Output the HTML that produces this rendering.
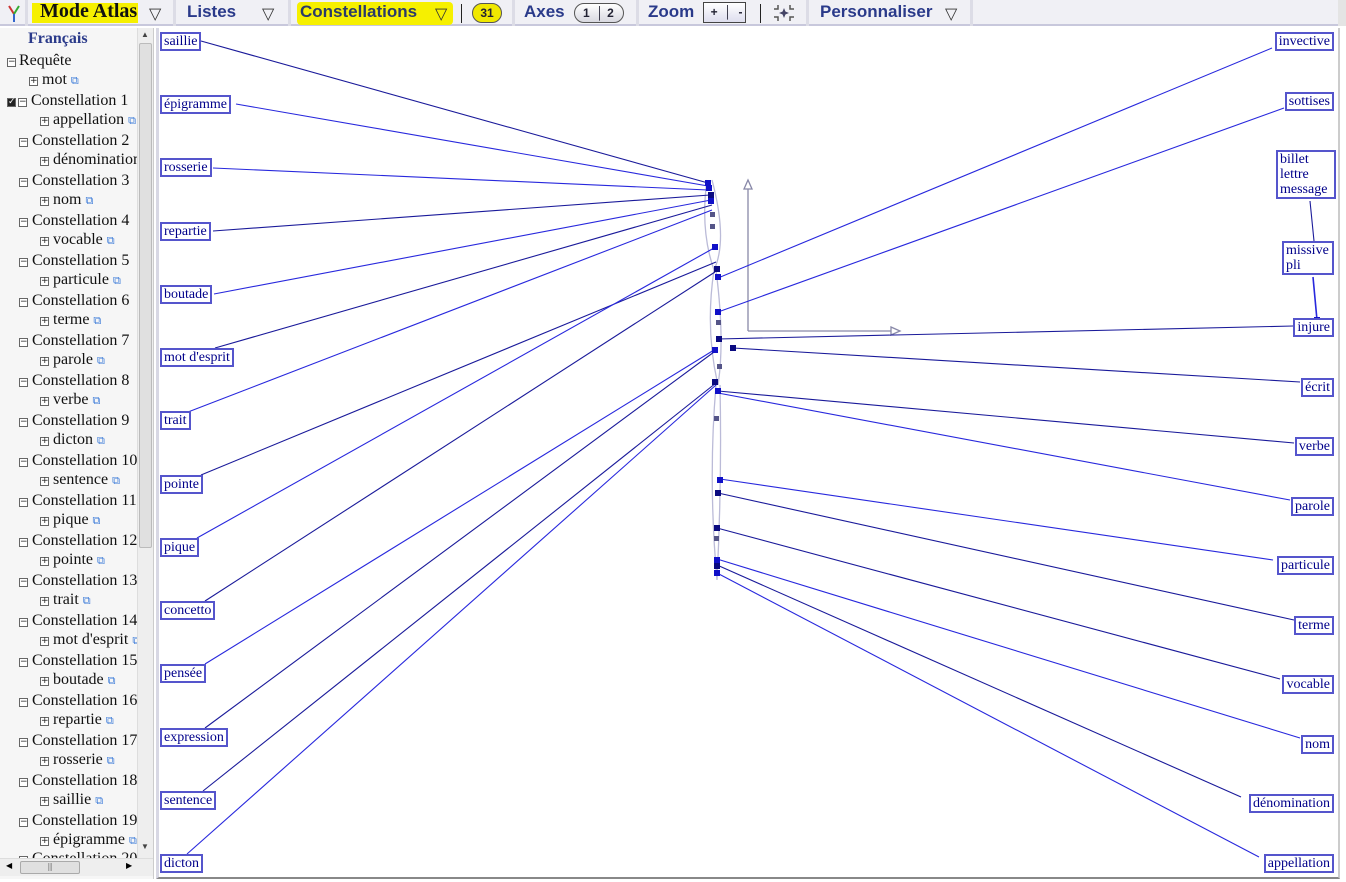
<!DOCTYPE html>
<html><head><meta charset="utf-8"><style>
*{margin:0;padding:0;box-sizing:border-box}
body{width:1346px;height:882px;overflow:hidden;background:#fff;font-family:"Liberation Serif",serif;position:relative}
#tb{position:absolute;left:0;top:0;width:1346px;height:26px;background:#f0f0f5;border-bottom:2px solid #c8c8dc}
.t{position:absolute;top:2px;font-family:"Liberation Sans",sans-serif;font-weight:bold;font-size:17px;color:#2a3a8a}
.sep{position:absolute;top:0;width:3px;height:26px;background:#dcdce6}
.hl{position:absolute;background:#f6f000}
.tri{position:absolute;top:4px;font-size:16px;color:#333;font-family:"DejaVu Sans",sans-serif}
.pill{position:absolute;top:3px;height:20px;border:1px solid #555;border-radius:10px;background:linear-gradient(#fff,#d8d8e0);font:bold 12px "Liberation Sans",sans-serif;color:#223;text-align:center;line-height:18px}
#lp{position:absolute;left:0;top:28px;width:154px;height:851px;background:#f6f6f6;border-right:1px solid #ccc}
#lp .h{position:absolute;left:28px;top:2px;font-weight:bold;font-size:16px;color:#2a3a8a}
.it{position:absolute;font-size:16px;color:#111;white-space:nowrap}
.bx{display:inline-block;width:9px;height:9px;border:1px solid #666;font:9px/7px "DejaVu Sans",sans-serif;text-align:center;vertical-align:1px;margin-right:4px;color:#222;background:#fff}
.lk{color:#3a7ad8;font-size:11px}
#vs{position:absolute;left:137px;top:28px;width:16px;height:830px;background:#eee;border-left:1px solid #ddd}
#hs{position:absolute;left:0;top:858px;width:153px;height:18px;background:#eee;border-top:1px solid #ddd}
#cv{position:absolute;left:156px;top:28px;width:1184px;height:851px;border-left:3px solid #d8d8e4;border-right:2px solid #ccc;border-bottom:2px solid #888}
.lb{position:absolute;border:2px solid #5555cc;background:#fff;font-size:14px;color:#00008a;padding:0 2px;line-height:15px;white-space:nowrap}
</style></head><body>
<div id="tb">
 <svg style="position:absolute;left:4px;top:3px" width="20" height="20"><path d="M10 11 L5 3" stroke="#c33" stroke-width="2" fill="none"/><path d="M10 11 L15 3" stroke="#3a3" stroke-width="2"/><path d="M10 11 L10 19" stroke="#36c" stroke-width="2"/></svg>
 <div class="sep" style="left:25px"></div>
 <div class="hl" style="left:32px;top:3px;width:106px;height:20px"></div>
 <div class="t" style="left:40px;font-family:'Liberation Serif',serif;font-size:20px;top:0px;color:#111">Mode Atlas</div>
 <div class="tri" style="left:149px">▽</div>
 <div class="sep" style="left:173px"></div>
 <div class="t" style="left:187px">Listes</div>
 <div class="tri" style="left:262px">▽</div>
 <div class="sep" style="left:288px"></div>
 <div class="hl" style="left:297px;top:2px;width:156px;height:23px;border-radius:4px"></div>
 <div class="t" style="left:300px;color:#2a3a6a">Constellations</div>
 <div class="tri" style="left:435px">▽</div>
 <div style="position:absolute;left:461px;top:4px;width:1px;height:19px;background:#222"></div>
 <div class="pill" style="left:472px;width:30px;background:#f0e800">31</div>
 <div class="sep" style="left:512px"></div>
 <div class="t" style="left:524px">Axes</div>
 <div class="pill" style="left:574px;width:50px;text-align:left;padding-left:8px">1 &nbsp;│&nbsp;2</div>
 <div class="sep" style="left:636px"></div>
 <div class="t" style="left:648px">Zoom</div>
 <div style="position:absolute;left:703px;top:2px;width:43px;height:21px;border:1px solid #444;background:linear-gradient(#fff,#dde);font:bold 12px 'Liberation Sans';line-height:19px;color:#223">&nbsp;&nbsp;+&nbsp;&nbsp;│&nbsp;&nbsp;-</div>
 <div style="position:absolute;left:760px;top:4px;width:1px;height:19px;background:#222"></div>
 <svg style="position:absolute;left:772px;top:3px" width="24" height="20"><path d="M2 6h4V2M22 6h-4V2M2 14h4v4M22 14h-4v4" stroke="#555" fill="none" stroke-width="1.5"/><path d="M12 5l2 5-2 5-2-5z" fill="#446"/><path d="M7 10l5-2 5 2-5 2z" fill="#446"/></svg>
 <div class="sep" style="left:806px"></div>
 <div class="t" style="left:820px">Personnaliser</div>
 <div class="tri" style="left:945px">▽</div>
 <div class="sep" style="left:970px"></div>
 <div class="sep" style="left:1338px;width:8px;background:#e4e4e4"></div>
</div>
<div id="lp">
 <div class="h">Français</div>
</div>
<div id="vs"><div style="position:absolute;left:1px;top:15px;width:13px;height:505px;background:#e0e0e0;border:1px solid #bbb;border-radius:2px"></div><div style="position:absolute;left:3px;top:2px;font-size:8px;color:#444">▲</div><div style="position:absolute;left:3px;top:814px;font-size:8px;color:#444">▼</div></div>
<div id="hs"><div style="position:absolute;left:20px;top:2px;width:60px;height:13px;background:#e0e0e0;border:1px solid #aaa;border-radius:2px;font-size:8px;text-align:center;color:#555">|||</div><div style="position:absolute;left:6px;top:2px;font-size:8px">◀</div><div style="position:absolute;left:126px;top:2px;font-size:8px">▶</div></div>
<div id="cv"></div>
<svg style="position:absolute;left:0;top:0" width="1346" height="882">
<g stroke="#8888a8" stroke-width="1.3" fill="none">
<path d="M748 331V182M748 331H898"/><path d="M744 189l4-9 4 9z M891 327l9 4-9 4z" fill="#fff"/>
<path d="M707 180 Q700 230 714 270 Q728 240 712 180" stroke="#bbbbd8"/>
<path d="M714 270 Q705 330 718 385 Q725 340 716 270" stroke="#bbbbd8"/>
<path d="M716 385 Q708 480 717 580 Q722 480 720 385" stroke="#bbbbd8"/>
</g>
<g stroke-width="1.1">
<path stroke="#1a1a9a" d="M201 41L708 183"/><path stroke="#2828dd" d="M236 104L708 186"/>
<path stroke="#2828dd" d="M213 168L708 190"/><path stroke="#1a1a9a" d="M213 231L710 195"/>
<path stroke="#2828dd" d="M214 294L711 200"/><path stroke="#1a1a9a" d="M215 348L712 205"/>
<path stroke="#2828dd" d="M188 412L712 210"/><path stroke="#1a1a9a" d="M201 475L716 262"/>
<path stroke="#2828dd" d="M197 538L714 248"/><path stroke="#1a1a9a" d="M205 601L715 272"/>
<path stroke="#2828dd" d="M205 664L714 350"/><path stroke="#1a1a9a" d="M205 728L714 352"/>
<path stroke="#1a1a9a" d="M203 791L716 383"/><path stroke="#2828dd" d="M187 854L716 385"/>
<path stroke="#2828dd" d="M1272 48L718 278"/><path stroke="#2828dd" d="M1284 108L718 312"/>
<path stroke="#1a1a9a" d="M1293 326L718 339"/><path stroke="#1a1a9a" d="M1300 382L733 348"/>
<path stroke="#1a1a9a" d="M1294 443L718 391"/><path stroke="#2828dd" d="M1290 500L718 393"/>
<path stroke="#2828dd" d="M1273 560L720 479"/><path stroke="#1a1a9a" d="M1294 620L718 493"/>
<path stroke="#1a1a9a" d="M1280 679L717 528"/><path stroke="#2828dd" d="M1300 738L717 559"/>
<path stroke="#1a1a9a" d="M1241 797L717 565"/><path stroke="#2828dd" d="M1259 857L717 573"/>
<path stroke="#1a1a9a" d="M1310 201L1314 241"/><path stroke="#2828dd" stroke-width="1.6" d="M1313 277L1317 320"/>
</g>
<g fill="#1010c8">
<rect x="705" y="180" width="6" height="6"/><rect x="706" y="185" width="6" height="6"/><rect x="708" y="192" width="6" height="6" fill="#0a0a80"/><rect x="708" y="198" width="6" height="6"/>
<rect x="710" y="212" width="5" height="5" fill="#555588"/><rect x="710" y="224" width="5" height="5" fill="#555588"/>
<rect x="712" y="244" width="6" height="6"/><rect x="714" y="266" width="6" height="6" fill="#0a0a80"/><rect x="715" y="274" width="6" height="6"/>
<rect x="715" y="309" width="6" height="6"/><rect x="716" y="320" width="5" height="5" fill="#555588"/><rect x="716" y="336" width="6" height="6" fill="#0a0a80"/>
<rect x="730" y="345" width="6" height="6" fill="#0a0a80"/><rect x="712" y="347" width="6" height="6"/><rect x="717" y="364" width="5" height="5" fill="#555588"/>
<rect x="712" y="379" width="6" height="6" fill="#0a0a80"/><rect x="715" y="388" width="6" height="6"/><rect x="714" y="416" width="5" height="5" fill="#555588"/>
<rect x="717" y="477" width="6" height="6"/><rect x="715" y="490" width="6" height="6" fill="#0a0a80"/><rect x="714" y="525" width="6" height="6" fill="#0a0a80"/>
<rect x="714" y="536" width="5" height="5" fill="#555588"/><rect x="714" y="557" width="6" height="6"/><rect x="714" y="563" width="6" height="6" fill="#0a0a80"/><rect x="714" y="570" width="6" height="6"/>
<rect x="1314" y="317" width="6" height="6"/>
</g>
</svg>
<div class="lb" style="left:160px;top:32px">saillie</div>
<div class="lb" style="left:160px;top:95px">épigramme</div>
<div class="lb" style="left:160px;top:158px">rosserie</div>
<div class="lb" style="left:160px;top:222px">repartie</div>
<div class="lb" style="left:160px;top:285px">boutade</div>
<div class="lb" style="left:160px;top:348px">mot d'esprit</div>
<div class="lb" style="left:160px;top:411px">trait</div>
<div class="lb" style="left:160px;top:475px">pointe</div>
<div class="lb" style="left:160px;top:538px">pique</div>
<div class="lb" style="left:160px;top:601px">concetto</div>
<div class="lb" style="left:160px;top:664px">pensée</div>
<div class="lb" style="left:160px;top:728px">expression</div>
<div class="lb" style="left:160px;top:791px">sentence</div>
<div class="lb" style="left:160px;top:854px">dicton</div>
<div class="lb" style="right:12px;top:32px">invective</div>
<div class="lb" style="right:12px;top:92px">sottises</div>
<div class="lb" style="left:1276px;top:150px;width:60px">billet<br>lettre<br>message</div>
<div class="lb" style="left:1282px;top:241px;width:52px">missive<br>pli</div>
<div class="lb" style="right:12px;top:318px">injure</div>
<div class="lb" style="right:12px;top:378px">écrit</div>
<div class="lb" style="right:12px;top:437px">verbe</div>
<div class="lb" style="right:12px;top:497px">parole</div>
<div class="lb" style="right:12px;top:556px">particule</div>
<div class="lb" style="right:12px;top:616px">terme</div>
<div class="lb" style="right:12px;top:675px">vocable</div>
<div class="lb" style="right:12px;top:735px">nom</div>
<div class="lb" style="right:12px;top:794px">dénomination</div>
<div class="lb" style="right:12px;top:854px">appellation</div>
<div style="position:absolute;left:0;top:0;width:137px;height:858px;overflow:hidden;pointer-events:none">
<div class="it" style="left:7px;top:52px"><span class="bx" style="margin-right:3px">−</span>Requête</div>
<div class="it" style="left:29px;top:71px"><span class="bx">+</span>mot <span class="lk">⧉</span></div>
<div class="it" style="left:7px;top:92px"><span class="bx" style="background:#222;color:#fff;margin-right:2px">✓</span><span class="bx">−</span>Constellation 1</div>
<div class="it" style="left:40px;top:111px"><span class="bx">+</span>appellation <span class="lk">⧉</span></div>
<div class="it" style="left:19px;top:132px"><span class="bx">−</span>Constellation 2</div><div class="it" style="left:40px;top:151px"><span class="bx">+</span>dénomination</div>
<div class="it" style="left:19px;top:172px"><span class="bx">−</span>Constellation 3</div><div class="it" style="left:40px;top:191px"><span class="bx">+</span>nom <span class="lk">⧉</span></div>
<div class="it" style="left:19px;top:212px"><span class="bx">−</span>Constellation 4</div><div class="it" style="left:40px;top:231px"><span class="bx">+</span>vocable <span class="lk">⧉</span></div>
<div class="it" style="left:19px;top:252px"><span class="bx">−</span>Constellation 5</div><div class="it" style="left:40px;top:271px"><span class="bx">+</span>particule <span class="lk">⧉</span></div>
<div class="it" style="left:19px;top:292px"><span class="bx">−</span>Constellation 6</div><div class="it" style="left:40px;top:311px"><span class="bx">+</span>terme <span class="lk">⧉</span></div>
<div class="it" style="left:19px;top:332px"><span class="bx">−</span>Constellation 7</div><div class="it" style="left:40px;top:351px"><span class="bx">+</span>parole <span class="lk">⧉</span></div>
<div class="it" style="left:19px;top:372px"><span class="bx">−</span>Constellation 8</div><div class="it" style="left:40px;top:391px"><span class="bx">+</span>verbe <span class="lk">⧉</span></div>
<div class="it" style="left:19px;top:412px"><span class="bx">−</span>Constellation 9</div><div class="it" style="left:40px;top:431px"><span class="bx">+</span>dicton <span class="lk">⧉</span></div>
<div class="it" style="left:19px;top:452px"><span class="bx">−</span>Constellation 10</div><div class="it" style="left:40px;top:471px"><span class="bx">+</span>sentence <span class="lk">⧉</span></div>
<div class="it" style="left:19px;top:492px"><span class="bx">−</span>Constellation 11</div><div class="it" style="left:40px;top:511px"><span class="bx">+</span>pique <span class="lk">⧉</span></div>
<div class="it" style="left:19px;top:532px"><span class="bx">−</span>Constellation 12</div><div class="it" style="left:40px;top:551px"><span class="bx">+</span>pointe <span class="lk">⧉</span></div>
<div class="it" style="left:19px;top:572px"><span class="bx">−</span>Constellation 13</div><div class="it" style="left:40px;top:591px"><span class="bx">+</span>trait <span class="lk">⧉</span></div>
<div class="it" style="left:19px;top:612px"><span class="bx">−</span>Constellation 14</div><div class="it" style="left:40px;top:631px"><span class="bx">+</span>mot d'esprit <span class="lk">⧉</span></div>
<div class="it" style="left:19px;top:652px"><span class="bx">−</span>Constellation 15</div><div class="it" style="left:40px;top:671px"><span class="bx">+</span>boutade <span class="lk">⧉</span></div>
<div class="it" style="left:19px;top:692px"><span class="bx">−</span>Constellation 16</div><div class="it" style="left:40px;top:711px"><span class="bx">+</span>repartie <span class="lk">⧉</span></div>
<div class="it" style="left:19px;top:732px"><span class="bx">−</span>Constellation 17</div><div class="it" style="left:40px;top:751px"><span class="bx">+</span>rosserie <span class="lk">⧉</span></div>
<div class="it" style="left:19px;top:772px"><span class="bx">−</span>Constellation 18</div><div class="it" style="left:40px;top:791px"><span class="bx">+</span>saillie <span class="lk">⧉</span></div>
<div class="it" style="left:19px;top:812px"><span class="bx">−</span>Constellation 19</div><div class="it" style="left:40px;top:831px"><span class="bx">+</span>épigramme <span class="lk">⧉</span></div>
<div class="it" style="left:19px;top:850px"><span class="bx">−</span>Constellation 20</div>
</div>
</body></html>
